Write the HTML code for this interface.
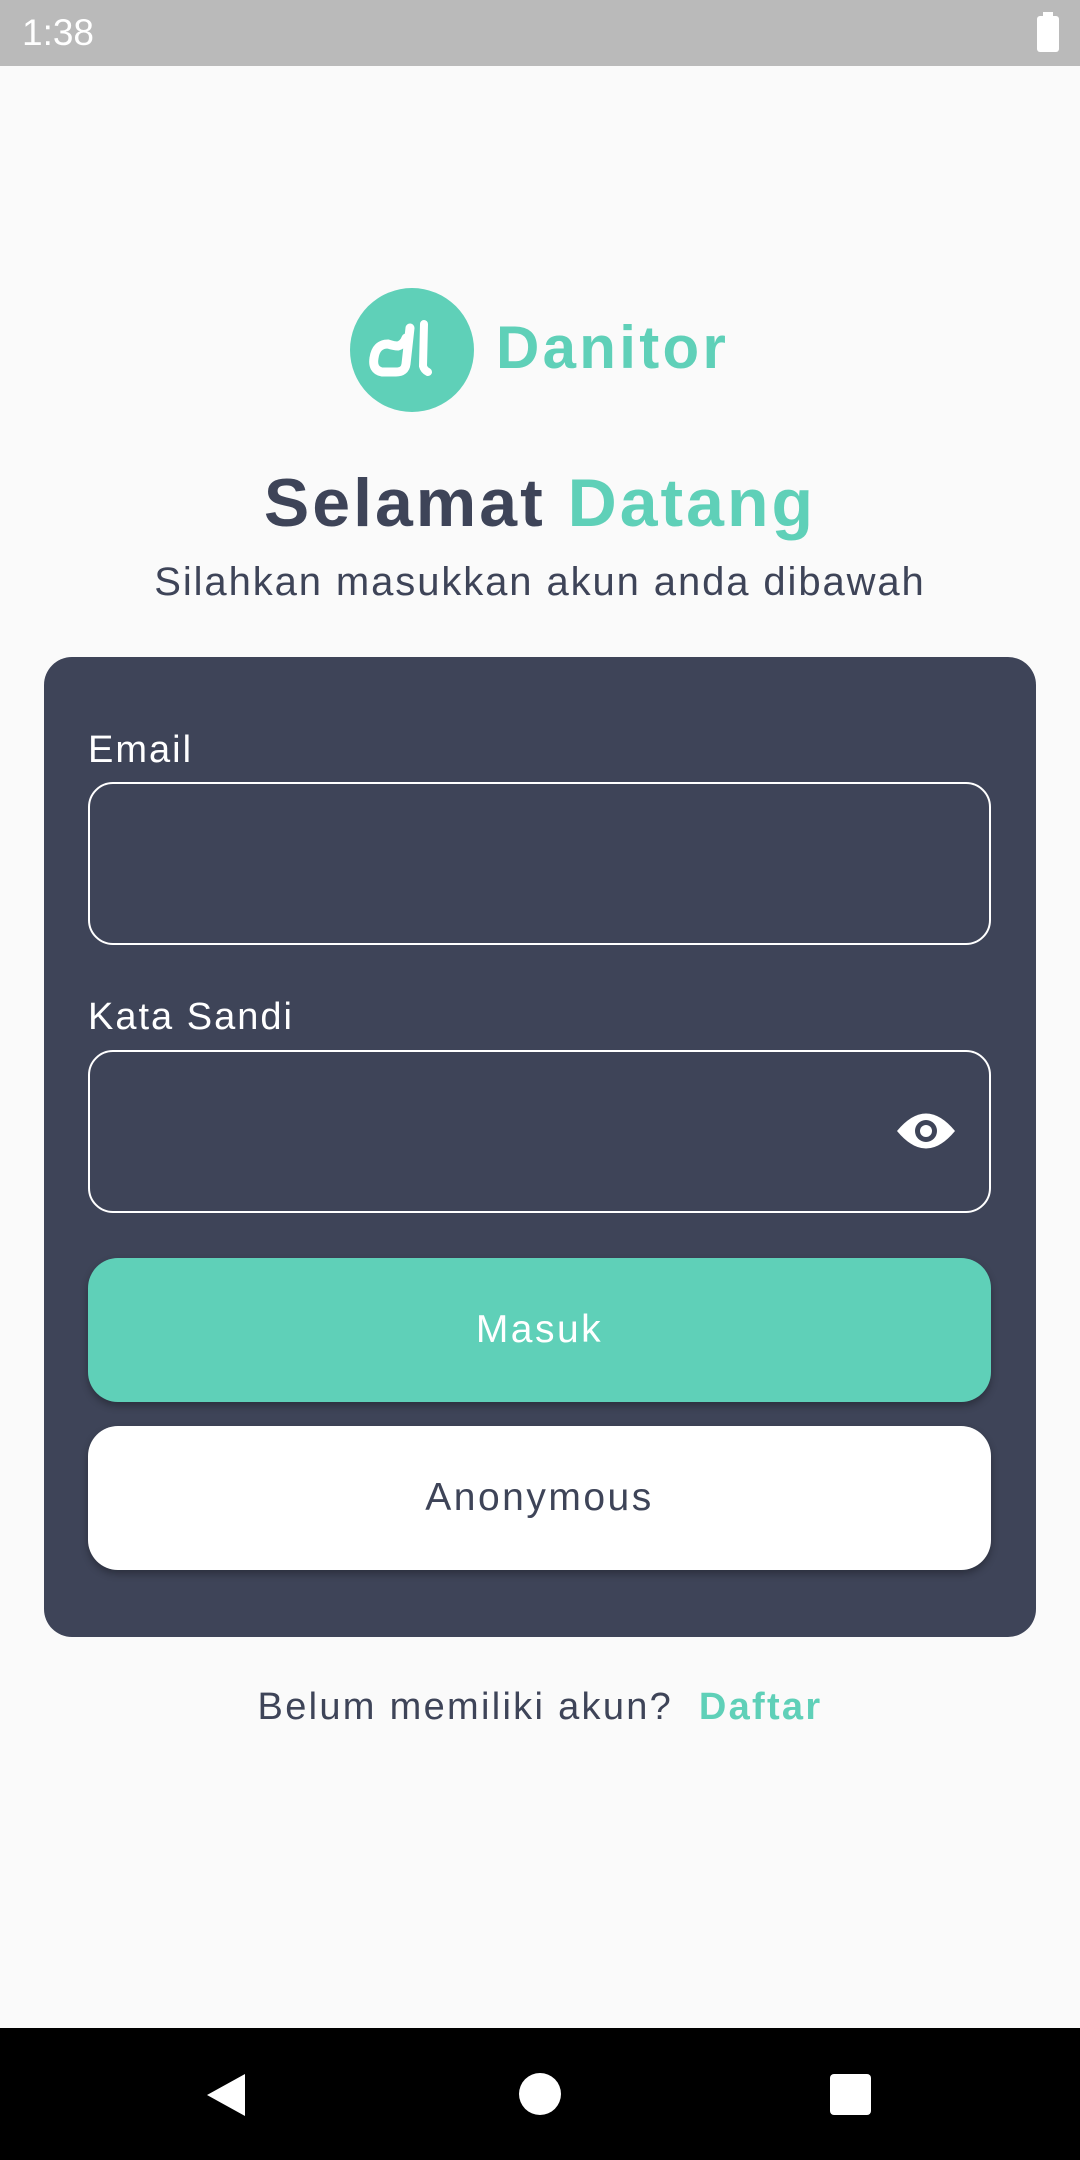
<!DOCTYPE html>
<html><head><meta charset="utf-8"><style>
*{margin:0;padding:0;box-sizing:border-box}
body{width:1080px;height:2160px;background:#fafafa;font-family:"Liberation Sans",sans-serif;position:relative;overflow:hidden;color:#3e4458}
.abs{position:absolute}
.sb{left:0;top:0;width:1080px;height:66px;background:#bababa}
.card{left:44px;top:657px;width:992px;height:980px;background:#3e4458;border-radius:28px}
.lbl{color:#fff;font-size:38px;left:88px;letter-spacing:2px}
.inp{left:88px;width:903px;height:163px;border:2.5px solid #fff;border-radius:25px}
.btn{left:88px;width:903px;height:144px;border-radius:30px;display:flex;align-items:center;justify-content:center;font-size:39px;letter-spacing:2.5px;box-shadow:0 4px 8px rgba(0,0,0,.3)}
.nav{left:0;top:2028px;width:1080px;height:132px;background:#000}
</style></head><body>
<div class="abs sb"><span class="abs" style="left:22px;top:12px;color:#fff;font-size:37px">1:38</span>
<div class="abs" style="left:1037px;top:16px;width:22px;height:36px;background:#fff;border-radius:3px"></div>
<div class="abs" style="left:1043px;top:12px;width:10px;height:6px;background:#fff"></div></div>

<svg class="abs" style="left:350px;top:288px" width="124" height="124" viewBox="0 0 124 124">
<circle cx="62" cy="62" r="62" fill="#5fd0b8"/>
<path d="M60 40 L56 76 Q55 84 46 84 L32 84 Q22 82 24 70 Q26 56 38 56 Q44 58 48 58 Q54 56 56 50" fill="none" stroke="#fff" stroke-width="9" stroke-linecap="round"/>
<path d="M74 36 L73 78 Q74 82 78 84" fill="none" stroke="#fff" stroke-width="8" stroke-linecap="round"/>
</svg>
<div class="abs" style="left:496px;top:313px;font-size:60px;font-weight:bold;color:#5fd0b8;letter-spacing:3.3px">Danitor</div>

<div class="abs" style="left:0;width:1080px;top:464px;text-align:center;font-size:68px;font-weight:bold;letter-spacing:3px">Selamat <span style="color:#5fd0b8">Datang</span></div>
<div class="abs" style="left:0;width:1080px;top:560px;text-align:center;font-size:40px;letter-spacing:1.9px">Silahkan masukkan akun anda dibawah</div>

<div class="abs card"></div>
<div class="abs lbl" style="top:729px">Email</div>
<div class="abs inp" style="top:782px"></div>
<div class="abs lbl" style="top:996px">Kata Sandi</div>
<div class="abs inp" style="top:1050px"></div>
<svg class="abs" style="left:895px;top:1108px" width="62" height="46" viewBox="0 0 62 46">
<path d="M2 23 Q31 -12 60 23 Q31 58 2 23Z" fill="#fff"/>
<circle cx="31" cy="23" r="11" fill="#3e4458"/><circle cx="31" cy="23" r="6" fill="#fff"/>
</svg>
<div class="abs btn" style="top:1258px;background:#5fd0b8;color:#fff">Masuk</div>
<div class="abs btn" style="top:1426px;background:#fff;color:#3e4458">Anonymous</div>

<div class="abs" style="left:0;width:1080px;top:1686px;text-align:center;font-size:38px;letter-spacing:2.3px">Belum memiliki akun?&nbsp; <b style="color:#5fd0b8">Daftar</b></div>

<div class="abs nav">
<svg class="abs" style="left:205px;top:44px" width="42" height="46"><path d="M40 2 L40 44 L2 23Z" fill="#fff"/></svg>
<div class="abs" style="left:519px;top:45px;width:42px;height:42px;border-radius:50%;background:#fff"></div>
<div class="abs" style="left:830px;top:46px;width:41px;height:41px;border-radius:4px;background:#fff"></div>
</div>
</body></html>
